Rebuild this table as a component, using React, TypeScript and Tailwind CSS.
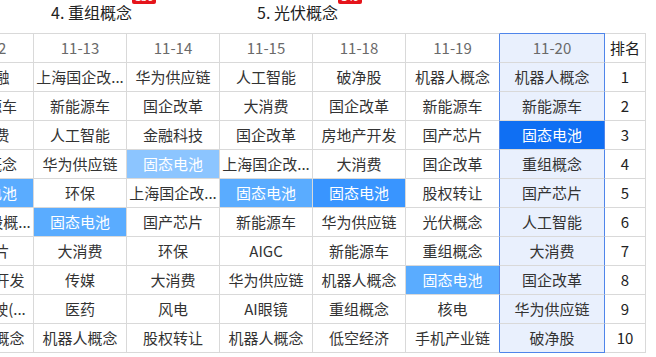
import React from 'react';

type Heat = 0 | 1 | 2 | 3 | 4;

interface Cell {
  name: string;
  heat?: Heat;
}

const dates = ['11-12', '11-13', '11-14', '11-15', '11-18', '11-19', '11-20'];

// each row: one concept per trading day, oldest first
const rows: Cell[][] = [
  [{ name: '大金融' }, { name: '上海国企改革' }, { name: '华为供应链' }, { name: '人工智能' }, { name: '破净股' }, { name: '机器人概念' }, { name: '机器人概念' }],
  [{ name: '新能源车' }, { name: '新能源车' }, { name: '国企改革' }, { name: '大消费' }, { name: '国企改革' }, { name: '新能源车' }, { name: '新能源车' }],
  [{ name: '大消费' }, { name: '人工智能' }, { name: '金融科技' }, { name: '国企改革' }, { name: '房地产开发' }, { name: '国产芯片' }, { name: '固态电池', heat: 4 }],
  [{ name: '重组概念' }, { name: '华为供应链' }, { name: '固态电池', heat: 1 }, { name: '上海国企改革' }, { name: '大消费' }, { name: '国企改革' }, { name: '重组概念' }],
  [{ name: '固态电池', heat: 2 }, { name: '环保' }, { name: '上海国企改革' }, { name: '固态电池', heat: 2 }, { name: '固态电池', heat: 3 }, { name: '股权转让' }, { name: '国产芯片' }],
  [{ name: '中字头股概念' }, { name: '固态电池', heat: 2 }, { name: '国产芯片' }, { name: '新能源车' }, { name: '华为供应链' }, { name: '光伏概念' }, { name: '人工智能' }],
  [{ name: '光芯片' }, { name: '大消费' }, { name: '环保' }, { name: 'AIGC' }, { name: '新能源车' }, { name: '重组概念' }, { name: '大消费' }],
  [{ name: '房地产开发' }, { name: '传媒' }, { name: '大消费' }, { name: '华为供应链' }, { name: '机器人概念' }, { name: '固态电池', heat: 2 }, { name: '国企改革' }],
  [{ name: '无人驾驶(车路云)' }, { name: '医药' }, { name: '风电' }, { name: 'AI眼镜' }, { name: '重组概念' }, { name: '核电' }, { name: '华为供应链' }],
  [{ name: '机器人概念' }, { name: '机器人概念' }, { name: '股权转让' }, { name: '机器人概念' }, { name: '低空经济' }, { name: '手机产业链' }, { name: '破净股' }],
];

const heatBg: Record<Heat, string> = {
  0: '',
  1: 'bg-[#8cc5ff] text-white',
  2: 'bg-[#5aacff] text-white',
  3: 'bg-[#3995ff] text-white',
  4: 'bg-[#0f6ff3] text-white',
};

const clip = (s: string) => (s.length > 5 ? s.slice(0, 5) + '...' : s);

const TODAY = dates.length - 1;

function edge(col: number) {
  // blue frame around the latest day, grey lines elsewhere
  if (col === TODAY || col === TODAY - 1) return 'border-r-[#4f85ea]';
  return 'border-r-[#d9d9d9]';
}

const widths = 'grid-cols-[93px_93px_93px_93px_93px_94px_105px_41px]';

function Topic({ label, count }: { label: string; count: number }) {
  return (
    <div className="w-[206px]">
      <span className="relative inline-block text-[16px] leading-[20px] text-[#222]">
        {label}
        <span className="absolute left-full top-[-14px] h-[16px] px-[3px] rounded-[2px] bg-[#e5141b] text-white text-[11px] leading-[16px]">
          {count}
        </span>
      </span>
    </div>
  );
}

export default function App() {
  return (
    <div className="w-[656px] h-[357px] overflow-hidden bg-white font-['Noto_Sans_CJK_SC',sans-serif] text-[#333]">
      <div className="h-[33px] flex pl-[51px]">
        <Topic label="4. 重组概念" count={136} />
        <Topic label="5. 光伏概念" count={149} />
      </div>

      <div className="ml-[-59px]">
        <div className={`grid ${widths} h-[30px] text-[15px]`}>
          {dates.map((d, i) => (
            <div
              key={d}
              className={`flex items-center justify-center border-t border-b border-r border-b-[#d9d9d9] ${edge(i)} ${
                i === TODAY ? 'border-t-[#4f85ea] bg-[#e9f0fd]' : 'border-t-[#d9d9d9]'
              } text-[#6a6a6a]`}
            >
              {d}
            </div>
          ))}
          <div className="flex items-center justify-center border-t border-b border-r border-[#d9d9d9] text-[#222]">排名</div>
        </div>

        {rows.map((row, r) => (
          <div key={r} className={`grid ${widths} h-[29px] text-[15px]`}>
            {row.map((c, i) => (
              <div
                key={i}
                className={`flex items-center justify-center whitespace-nowrap overflow-hidden border-b border-r ${edge(i)} ${
                  i === TODAY && r === rows.length - 1 ? 'border-b-[#4f85ea]' : 'border-b-[#d9d9d9]'
                } ${c.heat ? heatBg[c.heat] : i === TODAY ? 'bg-[#e9f0fd]' : ''}`}
              >
                {clip(c.name)}
              </div>
            ))}
            <div className="flex items-center justify-center border-b border-r border-[#d9d9d9] text-[#222]">{r + 1}</div>
          </div>
        ))}
      </div>
    </div>
  );
}
